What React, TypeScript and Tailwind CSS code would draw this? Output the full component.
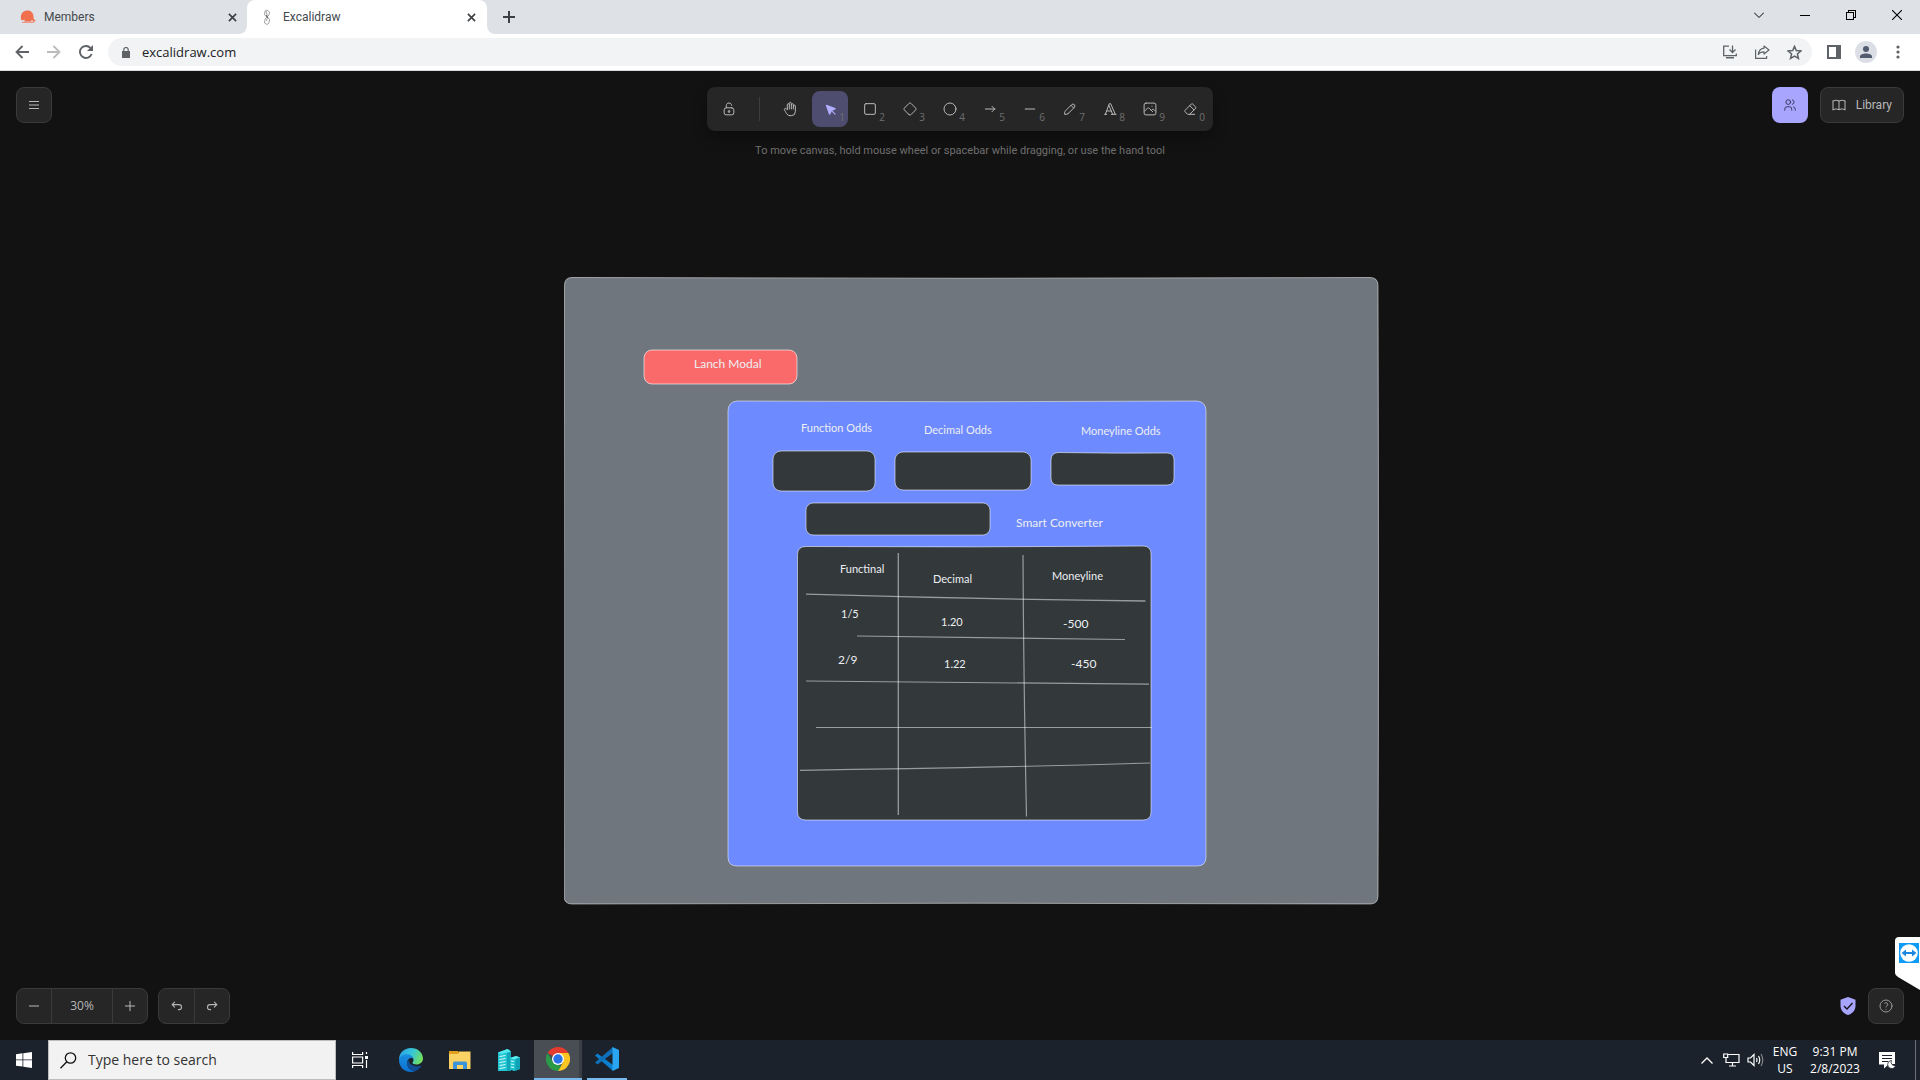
import type { ReactNode } from "react";

/* ---------- shared icon frame ---------- */

function Stroke({
  children,
  box = 24,
  size = "size-4",
  weight = 1.5,
  fill = "none",
}: {
  children: ReactNode;
  box?: number;
  size?: string;
  weight?: number;
  fill?: string;
}) {
  return (
    <svg
      aria-hidden="true"
      viewBox={`0 0 ${box} ${box}`}
      className={`${size} shrink-0`}
      fill={fill}
      stroke="currentColor"
      strokeWidth={weight}
      strokeLinecap="round"
      strokeLinejoin="round"
    >
      {children}
    </svg>
  );
}

/* ---------- browser chrome ---------- */

function CloseGlyph() {
  return (
    <svg viewBox="0 0 10 10" className="size-[9px]" stroke="#3c4043" strokeWidth="1.8" aria-hidden="true">
      <path d="M1 1l8 8M9 1l-8 8" />
    </svg>
  );
}

function TabStrip() {
  return (
    <div className="flex h-[34px] items-stretch justify-between bg-[#dee1e6]">
      <div className="flex items-stretch font-['Roboto',sans-serif]" role="tablist">
        <div className="flex w-[247px] items-center pr-[5px] pl-5" role="tab">
          <svg viewBox="0 0 16 16" className="size-4" fill="#f0704e" aria-hidden="true">
            <path d="M1 10C0 4 4 1.500 7.500 1.500S14 4 13.500 9c0 1.500 2 1.500 2 3.500H13l-1-2-1 2H4l1-2c-2 1-4 1-4-.500z" />
            <path d="M2 12.800h12v1.200H2z" opacity=".65" />
          </svg>
          <span className="ml-2 flex-1 text-xs text-[#45494d]">Members</span>
          <button aria-label="Close Members" className="flex size-5 items-center justify-center">
            <CloseGlyph />
          </button>
        </div>
        <div className="relative flex w-[240px] items-center rounded-t-lg bg-white pr-[6px] pl-3" role="tab" aria-selected="true">
          <svg viewBox="0 0 8 8" className="absolute bottom-0 -left-2 size-2" fill="#fff" aria-hidden="true">
            <path d="M8 0v8H0a8 8 0 0 0 8-8z" />
          </svg>
          <svg viewBox="0 0 8 8" className="absolute -right-2 bottom-0 size-2" fill="#fff" aria-hidden="true">
            <path d="M0 0v8h8a8 8 0 0 1-8-8z" />
          </svg>
          <svg viewBox="0 0 16 16" className="size-4" fill="none" stroke="#9a9a9a" strokeWidth=".9" aria-hidden="true">
            <path d="M6 2l2-1 2.500 2-.500 3-2 2-2.500-2zM8 8l2.500 2-.500 4-2 1.500L5.500 14 6 10zM7 2l1.500 6L7.500 12" />
            <path d="M7 6l2 3" stroke="#555" />
          </svg>
          <span className="ml-2 flex-1 text-xs text-[#45494d]">Excalidraw</span>
          <button aria-label="Close Excalidraw" className="flex size-5 items-center justify-center">
            <CloseGlyph />
          </button>
        </div>
        <button aria-label="New tab" className="flex w-11 items-center justify-center">
          <svg viewBox="0 0 12 12" className="size-3" stroke="#3c4043" strokeWidth="2" aria-hidden="true">
            <path d="M6 0v12M0 6h12" />
          </svg>
        </button>
      </div>
      <div className="flex pb-1 text-black">
        <button aria-label="Search tabs" className="flex w-[46px] items-center justify-center">
          <svg viewBox="0 0 10 6" className="h-[6px] w-[10px]" fill="none" stroke="currentColor" strokeWidth="1" aria-hidden="true">
            <path d="M0 .500l5 5 5-5" />
          </svg>
        </button>
        <button aria-label="Minimize" className="flex w-[46px] items-center justify-center">
          <svg viewBox="0 0 10 10" className="size-[10px]" shapeRendering="crispEdges" stroke="currentColor" aria-hidden="true">
            <path d="M0 5.500h10" />
          </svg>
        </button>
        <button aria-label="Restore" className="flex w-[46px] items-center justify-center">
          <svg viewBox="0 0 10 10" className="size-[10px]" fill="none" shapeRendering="crispEdges" stroke="currentColor" aria-hidden="true">
            <path d="M.5 2.500h7v7h-7zM2.500 2.500v-2h7v7h-2" />
          </svg>
        </button>
        <button aria-label="Close window" className="flex w-[46px] items-center justify-center">
          <svg viewBox="0 0 10 10" className="size-[10px]" stroke="currentColor" strokeWidth="1.1" aria-hidden="true">
            <path d="M0 0l10 10M10 0L0 10" />
          </svg>
        </button>
      </div>
    </div>
  );
}

function AddressRow() {
  return (
    <div className="flex h-[37px] items-center border-b border-[#d8dadd] bg-white px-[6px] text-[#5f6368]">
      <button aria-label="Back" className="flex size-8 items-center justify-center">
        <svg viewBox="0 0 14 14" className="size-[14px]" fill="none" stroke="currentColor" strokeWidth="1.8" aria-hidden="true">
          <path d="M14 7H1.500M7.500 1L1.500 7l6 6" />
        </svg>
      </button>
      <button aria-label="Forward" className="flex size-8 items-center justify-center text-[#babcbe]">
        <svg viewBox="0 0 14 14" className="size-[14px]" fill="none" stroke="currentColor" strokeWidth="1.8" aria-hidden="true">
          <path d="M0 7h12.500M6.500 1l6 6-6 6" />
        </svg>
      </button>
      <button aria-label="Reload" className="flex size-8 items-center justify-center">
        <svg viewBox="0 0 14 14" className="size-[14px]" fill="none" stroke="currentColor" strokeWidth="1.9" aria-hidden="true">
          <path d="M12.600 9A6 6 0 1 1 11.300 2.800L13 4.500" />
          <path d="M14 0v6H8z" fill="currentColor" stroke="none" />
        </svg>
      </button>
      <div className="ml-[6px] flex h-7 flex-1 items-center rounded-full bg-[#f1f3f4] pr-[2px] pl-[13px]">
        <svg viewBox="0 0 8 11" className="h-[11px] w-[10px]" aria-hidden="true">
          <path d="M0 4h8v7H0z" fill="currentColor" />
          <path d="M1.800 4V2.700a2.200 2.200 0 0 1 4.400 0V4" fill="none" stroke="currentColor" strokeWidth="1.200" />
        </svg>
        <input
          aria-label="Address"
          defaultValue="excalidraw.com"
          className="ml-[11px] h-7 min-w-0 flex-1 bg-transparent text-[13px] text-[#202124] outline-none"
        />
        <button aria-label="Install app" className="flex w-8 justify-center">
          <svg viewBox="0 0 14 14" className="size-[14px]" fill="none" stroke="currentColor" strokeWidth="1.300" aria-hidden="true">
            <path d="M6 1.200H.7v9.400h12.600V8.500M9.500.5v6.500M6.500 4.500l3 3 3-3" />
            <path d="M3 12h8v1.500H3z" fill="currentColor" stroke="none" />
          </svg>
        </button>
        <button aria-label="Share" className="flex w-8 justify-center">
          <svg viewBox="0 0 15 14" className="h-[14px] w-[15px]" fill="none" stroke="currentColor" strokeWidth="1.200" aria-hidden="true">
            <path d="M.6 4.500v8.900h11V11" />
            <path d="M9 1l5 4-5 4V6.800c-2.500 0-4.500.800-5.700 2.700C3.700 6 5.500 3.600 9 3.200z" strokeLinejoin="round" />
          </svg>
        </button>
        <button aria-label="Bookmark" className="flex w-8 justify-center">
          <svg viewBox="0 0 14 14" className="size-[15px]" fill="none" stroke="currentColor" strokeWidth="1.400" aria-hidden="true">
            <path d="M7 1.300l1.700 3.900 4.200.400-3.200 2.800 1 4.100L7 10.300l-3.700 2.200 1-4.100L1.100 5.600l4.200-.400z" />
          </svg>
        </button>
      </div>
      <button aria-label="Side panel" className="ml-[6px] flex size-8 items-center justify-center">
        <svg viewBox="0 0 14 14" className="size-[14px]" fill="currentColor" aria-hidden="true">
          <path fillRule="evenodd" d="M0 0h14v14H0zM2 2v10h7V2z" />
        </svg>
      </button>
      <button aria-label="Profile" className="flex size-8 items-center justify-center">
        <svg viewBox="0 0 22 22" className="size-[22px]" aria-hidden="true">
          <circle cx="11" cy="11" r="11" fill="#dbdfe5" />
          <circle cx="11" cy="8" r="3" fill="#515c6e" />
          <path d="M5 17v-1.500c0-2 3-3 6-3s6 1 6 3V17z" fill="#515c6e" />
        </svg>
      </button>
      <button aria-label="Menu" className="flex size-8 items-center justify-center">
        <svg viewBox="0 0 4 14" className="h-[14px] w-1" fill="currentColor" aria-hidden="true">
          <circle cx="2" cy="2" r="1.600" />
          <circle cx="2" cy="7" r="1.600" />
          <circle cx="2" cy="12" r="1.600" />
        </svg>
      </button>
    </div>
  );
}

/* ---------- drawing tools ---------- */

const tools: { name: string; hotkey?: string; icon: ReactNode }[] = [
  {
    name: "Hand",
    icon: (
      <Stroke>
        <path d="M8 13v-7.500a1.500 1.500 0 0 1 3 0v6.500" />
        <path d="M11 5.500v-2a1.500 1.500 0 1 1 3 0v8.500" />
        <path d="M14 5.500a1.500 1.500 0 0 1 3 0v6.500" />
        <path d="M17 7.500a1.500 1.500 0 0 1 3 0v8.500a6 6 0 0 1 -6 6h-2h.208a6 6 0 0 1 -5.012 -2.700a69.740 69.740 0 0 1 -.196 -.300c-.312 -.479 -1.407 -2.388 -3.286 -5.728a1.500 1.500 0 0 1 .536 -2.022a1.867 1.867 0 0 1 2.280 .280l1.470 1.470" />
      </Stroke>
    ),
  },
  {
    name: "Selection",
    hotkey: "1",
    icon: (
      <Stroke box={22} fill="currentColor">
        <path d="M6 6l4.153 11.793a.365 .365 0 0 0 .331 .207a.366 .366 0 0 0 .332 -.207l2.184 -4.793l4.787 -1.994a.355 .355 0 0 0 .213 -.323a.355 .355 0 0 0 -.213 -.323l-11.787 -4.360z" />
        <path d="M13.500 13.500l4.500 4.500" />
      </Stroke>
    ),
  },
  { name: "Rectangle", hotkey: "2", icon: <Stroke><rect x="4" y="4" width="16" height="16" rx="2" /></Stroke> },
  {
    name: "Diamond",
    hotkey: "3",
    icon: (
      <Stroke>
        <path d="M10.500 20.400l-6.900 -6.900c-.781 -.781 -.781 -2.219 0 -3l6.900 -6.900c.781 -.781 2.219 -.781 3 0l6.900 6.900c.781 .781 .781 2.219 0 3l-6.900 6.900c-.781 .781 -2.219 .781 -3 0z" />
      </Stroke>
    ),
  },
  { name: "Ellipse", hotkey: "4", icon: <Stroke><circle cx="12" cy="12" r="9" /></Stroke> },
  { name: "Arrow", hotkey: "5", icon: <Stroke><path d="M5 12h14M15 16l4-4M15 8l4 4" /></Stroke> },
  { name: "Line", hotkey: "6", icon: <Stroke box={20}><path d="M4.167 10h11.666" /></Stroke> },
  {
    name: "Draw",
    hotkey: "7",
    icon: (
      <Stroke box={20} weight={1.25}>
        <path d="m7.643 15.690 7.774-7.773a2.357 2.357 0 1 0-3.334-3.334L4.310 12.357a3.333 3.333 0 0 0-.977 2.357v1.953h1.953c.884 0 1.732-.352 2.357-.977Z" />
        <path d="m11.250 5.417 3.333 3.333" />
      </Stroke>
    ),
  },
  {
    name: "Text",
    hotkey: "8",
    icon: (
      <Stroke>
        <path d="M4 20h3M14 20h7M6.900 15h6.900M10.200 6.300L16 20M5 20l6-16h2l7 16" />
      </Stroke>
    ),
  },
  {
    name: "Insert image",
    hotkey: "9",
    icon: (
      <Stroke box={20} weight={1.25}>
        <path d="M12.500 6.667h.010" />
        <path d="M4.910 2.625h10.180a2.284 2.284 0 0 1 2.285 2.284v10.182a2.284 2.284 0 0 1-2.284 2.284H4.909a2.284 2.284 0 0 1-2.284-2.284V4.909a2.284 2.284 0 0 1 2.284-2.284Z" />
        <path d="m3.333 12.500 3.334-3.333c.773-.745 1.726-.745 2.500 0l4.166 4.166" />
        <path d="m11.667 11.667.833-.834c.774-.744 1.726-.744 2.500 0l1.667 1.667" />
      </Stroke>
    ),
  },
  {
    name: "Eraser",
    hotkey: "0",
    icon: (
      <Stroke>
        <path d="M19 20h-10.500l-4.210 -4.300a1 1 0 0 1 0 -1.410l10 -10a1 1 0 0 1 1.410 0l5 5a1 1 0 0 1 0 1.410l-9.200 9.300" />
        <path d="M18 13.300l-6.300 -6.300" />
      </Stroke>
    ),
  },
];

function ToolIsland() {
  return (
    <div className="flex items-center gap-1 rounded-lg bg-[#262627] py-1 pr-[5px] pl-1 text-[#b8b8b8] shadow-[0_7px_14px_rgba(0,0,0,0.3)]">
      <button aria-label="Keep tool active" className="flex size-9 items-center justify-center">
        <Stroke box={20} weight={1.25}>
          <path d="M13.542 8.542H6.458a2.500 2.500 0 0 0-2.500 2.500v3.750a2.500 2.500 0 0 0 2.500 2.500h7.084a2.500 2.500 0 0 0 2.500-2.500v-3.750a2.500 2.500 0 0 0-2.500-2.500Z" />
          <path d="M10 13.958a1.042 1.042 0 1 0 0-2.083 1.042 1.042 0 0 0 0 2.083Z" />
          <path d="M6.667 8.333V5.417C6.667 3.806 8.159 2.500 10 2.500c1.841 0 3.333 1.306 3.333 2.917" />
        </Stroke>
      </button>
      <div className="mx-2 h-6 w-px bg-[#3d3d3d]" />
      {tools.map((tool) => (
        <button
          key={tool.name}
          aria-label={tool.name}
          className={
            tool.hotkey === "1"
              ? "relative flex size-9 items-center justify-center rounded-lg bg-[#4f4d6f] text-[#b2aeff]"
              : "relative flex size-9 items-center justify-center rounded-lg"
          }
        >
          {tool.icon}
          {tool.hotkey && (
            <span className="absolute right-[3px] bottom-1 text-[10px] leading-3 text-[#6e6e6e]">{tool.hotkey}</span>
          )}
        </button>
      ))}
    </div>
  );
}

/* ---------- sketch on the canvas ---------- */

const notes = [
  { text: "Lanch Modal", place: "left-[130px] top-[79px] text-xs" },
  { text: "Function Odds", place: "left-[237px] top-[143px] text-[11px]" },
  { text: "Decimal Odds", place: "left-[360px] top-[145px] text-[11px]" },
  { text: "Moneyline Odds", place: "left-[517px] top-[146px] text-[11px]" },
  { text: "Smart Converter", place: "left-[452px] top-[238px] text-xs" },
  { text: "Functinal", place: "left-[276px] top-[284px] text-[11px]" },
  { text: "Decimal", place: "left-[369px] top-[294px] text-[11px]" },
  { text: "Moneyline", place: "left-[488px] top-[291px] text-[11px]" },
  { text: "1/5", place: "left-[277px] top-[329px] text-[11px]" },
  { text: "1.20", place: "left-[377px] top-[337px] text-[11px]" },
  { text: "-500", place: "left-[499px] top-[339px] text-xs" },
  { text: "2/9", place: "left-[274px] top-[375px] text-xs" },
  { text: "1.22", place: "left-[380px] top-[379px] text-[11px]" },
  { text: "-450", place: "left-[507px] top-[379px] text-xs" },
];

function Sketch() {
  return (
    <div className="absolute top-[206px] left-[564px] h-[628px] w-[815px]">
      <svg viewBox="564 277 815 628" className="h-[628px] w-[815px]" fill="none" stroke="#fff" strokeOpacity=".45" aria-hidden="true">
        <path fill="#6f767e" strokeOpacity=".5" d="M572 277.500Q970 279 1370 277.500q8 0 8 8Q1379 600 1378 896q0 8-8 8Q970 902.500 572 904q-8 0-8-8Q563 600 564.500 285.500q0-8 7.500-8z" />
        <rect x="644" y="350" width="153" height="34" rx="8" fill="#fb6a6a" strokeOpacity=".6" />
        <path fill="#6e8aff" strokeOpacity=".5" d="M737 401q230 1.500 460 0 9 1 9 10v446q0 9-9 9H737q-9 0-9-9V411q0-9 9-10z" />
        <g fill="#33383b" strokeOpacity=".55">
          <rect x="773" y="451" width="102" height="40" rx="8" />
          <rect x="895" y="452" width="136" height="38" rx="8" />
          <path d="M1058 452.500q55 1 109 .5 7 0 7 7v18q0 7-7 7h-109q-7 0-7-7v-18q0-7 7-7.500z" />
          <rect x="806" y="503" width="184" height="32" rx="7" />
          <path d="M806 546.500q170 1 337-.500 8 0 8 8v258q0 8-8 8H806q-8.500 0-8.500-8V554.500q0-8 8.500-8z" />
        </g>
        <g strokeOpacity=".5">
          <path d="M898.300 553v262" strokeWidth="1.300" />
          <path d="M1023 555q.500 120 3.500 261.500" strokeWidth="1.200" />
          <path d="M806 594.200q170 5 339.500 6.800" strokeWidth="1.300" />
          <path d="M857 636l268 3.500M806 681l343 3.200M816 727.500h336M800 770.300q170-2 350-7.300" strokeWidth="1.200" />
        </g>
      </svg>
      {notes.map((note) => (
        <span key={note.text} className={`absolute font-['Lato',sans-serif] leading-4 whitespace-nowrap text-[#eceff2] ${note.place}`}>
          {note.text}
        </span>
      ))}
    </div>
  );
}

function Whiteboard() {
  return (
    <main className="relative flex flex-1 flex-col justify-between bg-[#121212] p-4 font-['Open_Sans',sans-serif] text-[#b8b8b8]">
      <Sketch />
      <header className="relative grid grid-cols-[1fr_auto_1fr] items-start">
        <button aria-label="Main menu" className="flex size-9 items-center justify-center rounded-lg border border-[#3a3a3b] bg-[#262627]">
          <svg viewBox="0 0 10 10" className="size-[10px]" stroke="currentColor" aria-hidden="true">
            <path d="M0 1.500h10M0 5h10M0 8.500h10" />
          </svg>
        </button>
        <div className="flex flex-col items-center gap-[11px]">
          <ToolIsland />
          <p className="font-['Roboto',sans-serif] text-[11px] leading-[18px] text-[#6f6f6f]">
            To move canvas, hold mouse wheel or spacebar while dragging, or use the hand tool
          </p>
        </div>
        <div className="flex justify-end gap-3">
          <button aria-label="Live collaboration" className="flex size-9 items-center justify-center rounded-lg bg-[#a8a5ff] text-[#2c2b4a]">
            <Stroke size="size-[14px]">
              <circle cx="9" cy="7" r="4" />
              <path d="M3 21v-2a4 4 0 0 1 4-4h4a4 4 0 0 1 4 4v2M16 3.130a4 4 0 0 1 0 7.750M21 21v-2a4 4 0 0 0-3-3.850" />
            </Stroke>
          </button>
          <button className="flex h-9 items-center gap-[9px] rounded-lg border border-[#3a3a3b] bg-[#262627] pr-[11px] pl-[10px] font-['Roboto',sans-serif] text-xs">
            <Stroke size="size-4">
              <path d="M3 19a9 9 0 0 1 9 0 9 9 0 0 1 9 0M3 6a9 9 0 0 1 9 0 9 9 0 0 1 9 0M3 6v13M12 6v13M21 6v13" />
            </Stroke>
            Library
          </button>
        </div>
      </header>

      <footer className="relative flex items-center justify-between">
        <div className="flex gap-[10px]">
          <div className="flex h-9 divide-x divide-[#3a3a3b] rounded-lg border border-[#3a3a3b] bg-[#262627]">
            <button aria-label="Zoom out" className="flex w-[35px] items-center justify-center">
              <Stroke><path d="M5 12h14" /></Stroke>
            </button>
            <button aria-label="Reset zoom" className="w-[61px] text-xs">30%</button>
            <button aria-label="Zoom in" className="flex w-[34px] items-center justify-center">
              <Stroke><path d="M12 5v14M5 12h14" /></Stroke>
            </button>
          </div>
          <div className="flex h-9 divide-x divide-[#3a3a3b] rounded-lg border border-[#3a3a3b] bg-[#262627]">
            <button aria-label="Undo" className="flex w-[36px] items-center justify-center">
              <Stroke box={20} size="size-[15px]" weight={1.4}><path d="M7.500 10.833L4.167 7.500 7.500 4.167M4.167 7.500h9.166a3.333 3.333 0 0 1 0 6.667H12.500" /></Stroke>
            </button>
            <button aria-label="Redo" className="flex w-[34px] items-center justify-center">
              <Stroke box={20} size="size-[15px]" weight={1.4}><path d="M12.500 10.833L15.833 7.500 12.500 4.167M15.833 7.500H6.667a3.333 3.333 0 1 0 0 6.667H7.500" /></Stroke>
            </button>
          </div>
        </div>
        <div className="flex items-center gap-3">
          <a href="#encryption" aria-label="End-to-end encryption">
            <svg viewBox="0 0 16 18" className="h-[18px] w-4" aria-hidden="true">
              <path d="M8 0l7.500 2.700v6C15.500 13.500 12 16.500 8 18 4 16.500.5 13.500.5 8.700v-6z" fill="#a8a5ff" />
              <path d="M4 9l3 3 5.500-6" fill="none" stroke="#121212" strokeWidth="1.300" />
            </svg>
          </a>
          <button aria-label="Help" className="flex size-9 items-center justify-center rounded-lg border border-[#3a3a3b] bg-[#262627] text-[#999]">
            <Stroke>
              <circle cx="12" cy="12" r="9" />
              <path d="M12 17v.010M12 13.500a1.500 1.500 0 0 1 1-1.500 2.600 2.600 0 1 0-3-4" />
            </Stroke>
          </button>
        </div>
      </footer>

      <div className="absolute right-0 bottom-[50px] h-[53px] w-[25px]">
        <svg viewBox="0 0 25 53" className="h-[53px] w-[25px]" aria-hidden="true">
          <path d="M4 0h21v53L3 40Q0 38 0 36V4q0-4 4-4z" fill="#fff" />
          <path d="M4 6h20v20H4z" fill="#0e9bf7" />
          <circle cx="14" cy="16" r="8.800" fill="#fff" />
          <path d="M6.500 16l4.500-3.500V15h6v-2.500l4.500 3.500-4.500 3.500V17h-6v2.500z" fill="#1b87e0" />
        </svg>
      </div>
    </main>
  );
}

/* ---------- desktop taskbar ---------- */

function EdgeIcon() {
  return (
    <svg viewBox="0 0 24 24" className="size-6" aria-hidden="true">
      <defs>
        <linearGradient id="edgeTop" x1="0" x2="1" y1=".3" y2=".6">
          <stop offset="0" stopColor="#2aa4e8" />
          <stop offset=".5" stopColor="#36c6d8" />
          <stop offset="1" stopColor="#74e05a" />
        </linearGradient>
        <linearGradient id="edgeBody" x1="0" x2="0" y1="0" y2="1">
          <stop offset="0" stopColor="#1a8fe0" />
          <stop offset="1" stopColor="#0b70d2" />
        </linearGradient>
      </defs>
      <path d="M0 11.500C0 5 5 0 12 0s12 5 12 10.500c0 3.500-3 6-6.500 6-2.500 0-4-.800-4-1.700 0-.700 1-1.200 1-3C14.500 9 11.500 7 8 7c-4 0-7 2-8 4.500z" fill="url(#edgeTop)" />
      <path d="M0 12c0-3 3.500-5.800 7.500-5.800 3.500 0 6.500 2 7 4.800-.800-1-2-1.300-3-1-3 1-4 4-3 7 1 3.500 4 6 7.500 6.200-1.200.500-2.500.800-4 .800C5 24 0 19 0 12z" fill="url(#edgeBody)" />
      <path d="M9.500 11.500c-1.500 1.500-2 4-1 6.500 1.200 3.200 4.300 5.300 7.500 5.200 3-1 5-3 6.500-5.200.200-.500-.200-.800-.700-.500-1.500.800-3.300 1-5 .700-4.500-.700-7.300-3.200-7.300-6.700z" fill="#124d94" />
    </svg>
  );
}

function ExplorerIcon() {
  return (
    <svg viewBox="0 0 22 18" className="h-[18px] w-[22px]" aria-hidden="true">
      <path d="M0 2h9l1-1.500h11.500V18H0z" fill="#fbd264" />
      <path d="M0 0h9l1 1.500L9 3H0z" fill="#e2a11c" />
      <path d="M4 18v-6q0-1.500 1.500-1.500h11Q18 10.500 18 12v6h-4v-4H8v4z" fill="#3b93d8" />
    </svg>
  );
}

function ServersIcon() {
  return (
    <svg viewBox="0 0 22 22" className="size-[22px]" aria-hidden="true">
      <path d="M0 3.500L9.500 0 13 2.500V22H0z" fill="#21c6d2" />
      <path d="M0 3.500L9.500 0 13 2.500 3 5z" fill="#54eaf0" />
      <path d="M9 4l4-1.500V22H9z" fill="#12a5b8" />
      <path d="M12 9l6-2 4 1.500V20l-6 2-4-1.500z" fill="#1fc3d0" />
      <path d="M12 9l6-2 4 1.500-6 2z" fill="#5eeef2" />
      <path d="M17.500 10L22 8.500V20l-4.500 2z" fill="#10a3b6" />
      <path d="M1.500 7.500l6-1M1.500 10.500l6-1M1.500 13.500l6-1M1.500 16.500l6-1M1.500 19.500l6-1M13 12l3 .500M13 15l3 .500M13 18l3 .500" stroke="#d9fbfb" />
    </svg>
  );
}

function ChromeIcon() {
  return (
    <svg viewBox="0 0 24 24" className="size-6" aria-hidden="true">
      <path d="M12 12L1.600 6A12 12 0 0 1 22.400 6z" fill="#e43b2e" />
      <path d="M12 6h10.400A12 12 0 0 1 12 24l5.200-9z" fill="#fcc521" />
      <path d="M1.600 6l5.200 9 5.200 3 3 .700L12 24A12 12 0 0 1 1.600 6z" fill="#2b9a48" />
      <circle cx="12" cy="12" r="6" fill="#fff" />
      <circle cx="12" cy="12" r="4.700" fill="#2a72e8" />
    </svg>
  );
}

function CodeIcon() {
  return (
    <svg viewBox="0 0 24 24" className="size-6" aria-hidden="true">
      <path d="M0 8.500L2.500 6.500 18 18v6z" fill="#0b7fcc" />
      <path d="M0 15.500L2.500 17.500 18 6V0z" fill="#0f6fb8" />
      <path d="M17.500 0L24 3v18l-6.500 3z" fill="#29a5f2" />
    </svg>
  );
}

function Taskbar() {
  return (
    <footer className="flex h-10 items-stretch justify-between bg-[#1b222b] text-white">
      <div className="flex items-stretch">
        <button aria-label="Start" className="flex w-12 items-center justify-center">
          <svg viewBox="0 0 16 16" className="size-4" fill="#fff" aria-hidden="true">
            <path d="M0 2.200L6.500 1.300V7.500H0zM7.300 1.200L16 0v7.500H7.300zM0 8.300h6.500v6.300L0 13.700zM7.300 8.300H16V16l-8.700-1.200z" />
          </svg>
        </button>
        <label className="flex w-72 items-center border border-[#bdbdbd] bg-[#f2f2f2] pl-[11px]">
          <svg viewBox="0 0 17 17" className="size-[17px] shrink-0" fill="none" stroke="#111" strokeWidth="1.300" aria-hidden="true">
            <circle cx="10.500" cy="6" r="5.200" />
            <path d="M6.800 9.800L.5 16.300" />
          </svg>
          <input
            aria-label="Search"
            placeholder="Type here to search"
            className="ml-[11px] min-w-0 flex-1 bg-transparent text-sm text-[#333] outline-none placeholder:text-[#333]"
          />
        </label>
        <div className="flex items-stretch gap-px">
          <button aria-label="Task view" className="mr-[2px] flex w-12 items-center justify-center">
            <svg viewBox="0 0 16 16" className="size-4" fill="none" stroke="#fff" strokeWidth="1.200" aria-hidden="true">
              <path d="M.6 0v2.500h10V0M.6 5h10v6h-10zM.6 16v-2.500h10V16M14.500 0v2M14.500 8v8" />
              <path d="M13 4h3v3h-3z" fill="#fff" stroke="none" />
            </svg>
          </button>
          <button aria-label="Edge" className="flex w-12 items-center justify-center"><EdgeIcon /></button>
          <button aria-label="File Explorer" className="flex w-12 items-center justify-center"><ExplorerIcon /></button>
          <button aria-label="Server Manager" className="flex w-12 items-center justify-center"><ServersIcon /></button>
          <button aria-label="Chrome" className="flex w-12 border-b-2 border-[#76b9ed]">
            <span className="flex h-full w-[45px] items-center justify-center bg-[#494d54] pl-[2px]"><ChromeIcon /></span>
            <span className="h-full w-[3px] bg-[#3a3f46]" />
          </button>
          <button aria-label="Visual Studio Code" className="mx-1 flex w-10 items-center justify-center border-b-2 border-[#76b9ed]"><CodeIcon /></button>
        </div>
      </div>

      <div className="flex items-stretch text-xs leading-[17px]">
        <button aria-label="Show hidden icons" className="flex w-6 items-center justify-center">
          <svg viewBox="0 0 12 7" className="h-[7px] w-3" fill="none" stroke="#fff" strokeWidth="1.300" aria-hidden="true">
            <path d="M.5 6.500L6 1l5.500 5.500" />
          </svg>
        </button>
        <button aria-label="Network" className="flex w-6 items-center justify-center">
          <svg viewBox="0 0 17 14" className="h-[14px] w-[17px]" fill="none" stroke="#fff" strokeWidth="1.200" aria-hidden="true">
            <path d="M5 1.500h11v8H3V5M9.500 9.500v3M6 13h7M.7 1h4v3.500h-4zM3 4.500v2" />
          </svg>
        </button>
        <button aria-label="Volume" className="flex w-6 items-center justify-center">
          <svg viewBox="0 0 17 14" className="h-[14px] w-[17px]" fill="none" stroke="#fff" strokeWidth="1.200" aria-hidden="true">
            <path d="M1 5h2.500L7 1.500v11L3.500 9H1zM9.500 5q1.200 2 0 4M11.500 3q2.500 4 0 8" />
            <path d="M14 1q3.500 6 0 12" opacity=".45" />
          </svg>
        </button>
        <button className="ml-px flex w-[34px] flex-col items-center justify-center">
          <span>ENG</span>
          <span>US</span>
        </button>
        <button className="flex w-[66px] flex-col items-center justify-center">
          <span>9:31 PM</span>
          <span>2/8/2023</span>
        </button>
        <button aria-label="Notifications" className="flex w-[38px] items-center justify-center">
          <svg viewBox="0 0 17 17" className="size-[17px]" aria-hidden="true">
            <path d="M0 0h16v12H10l-5 4.500V12.500H0z" fill="#fff" />
            <path d="M3 3.500h10M3 6.500h10M3 9.500h6" stroke="#1b222b" strokeWidth="1.200" />
            <path d="M12.500 8.500a4 4 0 1 0 4 5 3.500 3.500 0 0 1-4-5z" fill="#fff" stroke="#1b222b" strokeWidth=".8" />
          </svg>
        </button>
        <button aria-label="Show desktop" className="ml-[9px] w-[5px] border-l border-[#6b7078]" />
      </div>
    </footer>
  );
}

export default function App() {
  return (
    <div className="flex min-h-screen flex-col bg-[#121212] font-['Open_Sans',sans-serif]">
      <TabStrip />
      <AddressRow />
      <Whiteboard />
      <Taskbar />
    </div>
  );
}
